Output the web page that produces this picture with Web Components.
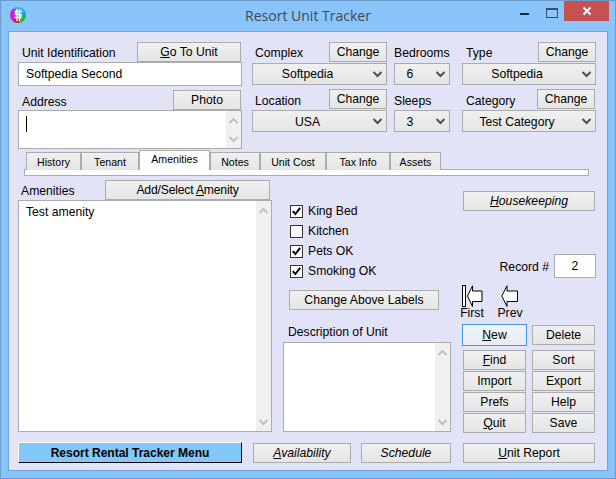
<!DOCTYPE html>
<html><head><meta charset="utf-8"><title>Resort Unit Tracker</title>
<style>
html,body{margin:0;padding:0;width:616px;height:479px;overflow:hidden}
body{font:12.2px "Liberation Sans",Arial,sans-serif;color:#000}
</style></head><body>
<rk-app></rk-app>
<script>
function def(name,css,html,extra){
  class C extends HTMLElement{
    constructor(){super();const r=this.attachShadow({mode:'open'});r.innerHTML='<style>'+css+'</style>'+(typeof html==='function'?html(this):html);}
  }
  customElements.define(name,C);
}
const chev=(up,c,w)=>`<svg width="11" height="7" viewBox="0 0 11 7"><path d="${up?'M1.5 6 5.5 2 9.5 6':'M1.5 1 5.5 5 9.5 1'}" fill="none" stroke="${c}" stroke-width="${w}"/></svg>`;
const face=`border:1px solid #acacac;background:linear-gradient(#f0f0f0,#e5e5e5);box-sizing:border-box;`;

def('rk-btn',`:host{display:flex;align-items:center;justify-content:center;${face}height:20px;font-size:12.2px;padding-bottom:1px;white-space:nowrap}
:host([focused]){border:1px solid #3c9ae8;height:22px;padding-bottom:0;background:linear-gradient(#f0f5fa,#e6ecf2)}
:host([italic]){font-style:italic}`,`<slot></slot>`);

def('rk-menu-btn',`:host{display:flex;align-items:center;justify-content:center;box-sizing:border-box;height:21px;background:#82c8fa;font-weight:bold;font-size:12px;border:1px solid;border-color:#fff #000 #000 #fff;white-space:nowrap}`,`<slot></slot>`);

def('rk-select',`:host{display:flex;align-items:center;${face}height:22px;font-size:12.2px;position:relative}
:host([lower]){padding-top:2px}
.t{flex:1;text-align:center;padding-right:24px;padding-bottom:1px;white-space:nowrap}
svg{position:absolute;right:3px;top:7px}`,`<div class="t"><slot></slot></div>`+chev(false,'#505050',2));

def('rk-scroll',`:host{display:flex;flex-direction:column;justify-content:space-between;align-items:center;width:15px;background:#f0f0f0;padding:6px 0 5px;box-sizing:border-box}`,chev(true,'#c0c0c0',2)+chev(false,'#c0c0c0',2));

def('rk-memo',`:host{display:flex;box-sizing:border-box;border:1px solid #acacac;background:#fff;font-size:12.2px}
.b{flex:1;padding:4px 7px;white-space:pre}
.c{display:block;width:1px;height:16px;background:#000;margin-top:1px}`,
  h=>`<div class="b">${h.hasAttribute('caret')?'<i class="c"></i>':'<slot></slot>'}</div><rk-scroll></rk-scroll>`);

def('rk-field',`:host{display:flex;align-items:center;box-sizing:border-box;border:1px solid #acacac;background:#fff;font-size:12.2px;padding-left:7px;padding-bottom:1px;white-space:nowrap}
:host([center]){justify-content:center;padding-left:0}`,`<slot></slot>`);

def('rk-check',`:host{display:flex;align-items:center;height:20px;font-size:12.2px;gap:5px}
.b{width:13px;height:13px;box-sizing:border-box;border:1px solid #333;background:#fff;display:flex}`,
  h=>`<span class="b">${h.hasAttribute('checked')?'<svg width="11" height="11" viewBox="0 0 11 11"><path d="M1.8 5.2 4.3 8 9.2 1.8" fill="none" stroke="#000" stroke-width="2"/></svg>':''}</span><slot></slot>`);

def('rk-tab',`:host{display:flex;align-items:center;justify-content:center;box-sizing:border-box;height:18px;${face}border-bottom:none;font-size:10.6px;padding-top:1px;white-space:nowrap}
:host([active]){height:20px;background:#fff;position:relative;z-index:1;padding-top:0;padding-bottom:3px}`,`<slot></slot>`);

def('rk-tabs',`:host{display:block}
.row{display:flex;align-items:flex-end;height:20px;padding-left:8px;position:relative}
.strip{height:7px;margin:-1px 9px 0 6px;width:565px;box-sizing:border-box;background:#fff;border:1px solid #acacac}`,
 `<div class="row"><slot></slot></div><div class="strip"></div>`);

def('rk-titlebar',`:host{display:flex;align-items:flex-start;height:30px;position:relative;color:#3f4a55;font:14px "Open Sans","Noto Sans",sans-serif}
.ico{position:absolute;left:9px;top:6px;width:16px;height:16px;border-radius:50%;background:conic-gradient(#35b8d8 0 60deg,#2f9be0 60deg 90deg,#1fb04a 100deg 170deg,#e01c24 175deg 215deg,#d818d8 230deg 300deg,#7a50e8 320deg,#35b8d8 350deg)}
.ico svg{display:block}
.title{flex:1;text-align:center;margin-top:5px;line-height:20px}
.min{position:absolute;left:519px;top:12px;width:9px;height:2px;background:#1a2a38}
.max{position:absolute;left:545px;top:7px;width:10px;height:7px;border:1px solid #3a5068;border-top-width:2px}
.close{position:absolute;left:563px;top:0;width:45px;height:20px;background:#c75050;display:flex;align-items:center;justify-content:center}`,
`<div class="ico"><svg width="16" height="16" viewBox="0 0 16 16"><path d="M7 2v12M9.5 2v12M12 4.5H5.5V7.5H11V10.5H4.5" fill="none" stroke="#fff" stroke-width="1.3"/></svg></div>
<div class="title"><slot></slot></div><i class="min"></i><i class="max"></i>
<div class="close"><svg width="10" height="10" viewBox="0 0 10 10"><path d="M1.5 1.5 8.5 8.5M8.5 1.5 1.5 8.5" stroke="#fff" stroke-width="2"/></svg></div>`);

def('rk-arrow',`:host{display:flex;flex-direction:column;align-items:center;width:24px;font-size:12.2px;line-height:13px}
svg{display:block;margin-bottom:-1px}`,
 h=>(h.hasAttribute('first')
 ?`<svg width="21" height="23" viewBox="0 0 21 23"><rect x=".5" y=".5" width="3" height="21" fill="#fff" stroke="#000"/><path d="M5.5 11 10.5 .8V6H20V16.5H10.5V21.5Z" fill="#fff" stroke="#000"/></svg>`
 :`<svg width="18" height="23" viewBox="0 0 18 23"><path d="M.8 11 6 .8V6H16.5V16.5H6V21.5Z" fill="#fff" stroke="#000"/></svg>`)+`<slot></slot>`);

def('rk-app',`
:host{display:block;width:616px;height:479px;box-sizing:border-box;background:#89c4fb;border:1px solid #6c9ccb;position:relative;overflow:hidden}
.client{margin:0 7px;height:440px;box-sizing:border-box;background:#e3e3f8;border:1px solid #6fa6dc;padding:10px 0 0 9px}
.top{display:flex;height:108px}
.col{display:flex;flex-direction:column}
.head{display:flex;align-items:center;justify-content:space-between;height:20px}
.lab{padding-top:1px;white-space:nowrap}
.head.second .lab{padding-top:3px}
.c1{width:224px}.c2{width:135px;margin-left:10px}.c3{width:56px;margin-left:7px}.c4{width:134px;margin-left:12px}
.c2 .lab{padding-left:3px}.c4 .lab{padding-left:4px}.c1 .lab{padding-left:4px}
.chg{width:58px}
.low{display:flex;height:253px;margin-top:4px}
.a{width:254px}.b{width:168px;margin-left:11px}.d{width:134px;margin-left:11px}
.checks{margin:21px 0 0 7px}
.bottom{display:flex;margin-top:9px;align-items:flex-start}
.grid{display:grid;grid-template-columns:63px 63px;column-gap:6px;row-gap:1px;margin:0 0 0 1px}
.rec{display:flex;justify-content:flex-end;align-items:center;margin-top:43px;gap:5px;height:24px}
.nav{display:flex;gap:14px;margin:7px 0 0 -2px;height:40px}
`,`
<rk-titlebar>Resort Unit Tracker</rk-titlebar>
<div class="client">
 <div class="top">
  <div class="col c1">
   <div class="head"><span class="lab">Unit Identification</span><rk-btn style="width:104px;margin-right:1px"><span><u>G</u>o To Unit</span></rk-btn></div>
   <rk-field style="height:24px">Softpedia Second</rk-field>
   <div class="head second" style="margin-top:4px"><span class="lab">Address</span><rk-btn style="width:68px;margin-right:1px">Photo</rk-btn></div>
   <rk-memo caret style="height:39px"></rk-memo>
  </div>
  <div class="col c2">
   <div class="head"><span class="lab">Complex</span><rk-btn class="chg">Change</rk-btn></div>
   <rk-select style="margin-top:1px">Softpedia</rk-select>
   <div class="head second" style="margin-top:4px"><span class="lab">Location</span><rk-btn class="chg">Change</rk-btn></div>
   <rk-select lower style="margin-top:1px">USA</rk-select>
  </div>
  <div class="col c3">
   <div class="head"><span class="lab">Bedrooms</span></div>
   <rk-select style="margin-top:1px">6</rk-select>
   <div class="head second" style="margin-top:4px"><span class="lab">Sleeps</span></div>
   <rk-select lower style="margin-top:1px">3</rk-select>
  </div>
  <div class="col c4">
   <div class="head"><span class="lab">Type</span><rk-btn class="chg">Change</rk-btn></div>
   <rk-select style="margin-top:1px">Softpedia</rk-select>
   <div class="head second" style="margin-top:4px"><span class="lab">Category</span><rk-btn class="chg" style="margin-right:1px">Change</rk-btn></div>
   <rk-select lower style="margin-top:1px">Test Category</rk-select>
  </div>
 </div>
 <rk-tabs>
  <rk-tab style="width:55px">History</rk-tab><rk-tab style="width:58px">Tenant</rk-tab><rk-tab active style="width:71px">Amenities</rk-tab><rk-tab style="width:50px">Notes</rk-tab><rk-tab style="width:66px">Unit Cost</rk-tab><rk-tab style="width:64px">Tax Info</rk-tab><rk-tab style="width:51px">Assets</rk-tab>
 </rk-tabs>
 <div class="low">
  <div class="col a">
   <div class="head"><span class="lab" style="padding-left:3px">Amenities</span><rk-btn style="width:165px;margin-right:2px;letter-spacing:-.2px"><span>Add/Select <u>A</u>menity</span></rk-btn></div>
   <rk-memo style="height:232px">Test amenity</rk-memo>
  </div>
  <div class="col b">
   <div class="checks">
    <rk-check checked>King Bed</rk-check><rk-check>Kitchen</rk-check><rk-check checked>Pets OK</rk-check><rk-check checked>Smoking OK</rk-check>
   </div>
   <rk-btn style="width:150px;margin:9px 0 0 6px">Change Above Labels</rk-btn>
   <div class="head" style="margin-top:11px"><span class="lab" style="padding-left:5px">Description of Unit</span></div>
   <rk-memo style="height:90px;margin-top:1px"></rk-memo>
  </div>
  <div class="col d">
   <rk-btn italic style="width:132px;margin:11px 0 0 1px"><span><u>H</u>ousekeeping</span></rk-btn>
   <div class="rec"><span class="lab">Record #</span><rk-field center style="width:42px;height:24px">2</rk-field></div>
   <div class="nav"><rk-arrow first>First</rk-arrow><rk-arrow>Prev</rk-arrow></div>
   <div class="grid">
    <rk-btn focused style="width:65px;margin:-1px 0 3px -1px"><span><u>N</u>ew</span></rk-btn><rk-btn style="margin-bottom:3px">Delete</rk-btn>
    <rk-btn><span><u>F</u>ind</span></rk-btn><rk-btn>Sort</rk-btn>
    <rk-btn>Import</rk-btn><rk-btn>Export</rk-btn>
    <rk-btn>Prefs</rk-btn><rk-btn>Help</rk-btn>
    <rk-btn><span><u>Q</u>uit</span></rk-btn><rk-btn>Save</rk-btn>
   </div>
  </div>
 </div>
 <div class="bottom">
  <rk-menu-btn style="width:224px">Resort Rental Tracker Menu</rk-menu-btn>
  <rk-btn italic style="width:98px;margin:1px 0 0 11px"><span><u>A</u>vailability</span></rk-btn>
  <rk-btn italic style="width:90px;margin:1px 0 0 10px">Schedule</rk-btn>
  <rk-btn style="width:132px;margin:1px 0 0 12px"><span><u>U</u>nit Report</span></rk-btn>
 </div>
</div>
`);
</script>
</body></html>
